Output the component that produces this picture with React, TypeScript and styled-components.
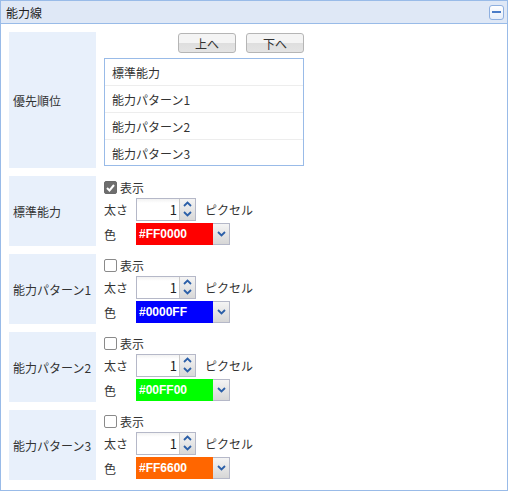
import React from 'react'
import styled, { createGlobalStyle } from 'styled-components'

const GlobalStyle = createGlobalStyle`
  html, body { margin: 0; padding: 0; background: #fff; }
  body { font-family: "Noto Sans CJK JP", "Noto Sans", sans-serif; font-size: 12px; color: #222; }
`

const Panel = styled.div`
  width: 508px;
  height: 491px;
  box-sizing: border-box;
  border: 1px solid #99bbe8;
  background: #fff;
`

const Header = styled.div`
  height: 22px;
  border-bottom: 1px solid #99bbe8;
  background: #dfe8f6;
  display: flex;
  align-items: center;
  justify-content: space-between;
  padding: 0 3px 0 5px;
  font-size: 12px;
  color: #222;
`

const CollapseBtn = styled.div`
  width: 13px;
  height: 13px;
  border: 1px solid #8fb0e0;
  border-radius: 3px;
  background: linear-gradient(#ffffff, #e6eefa);
  display: flex;
  align-items: center;
  justify-content: center;
  &::after {
    content: '';
    width: 9px;
    height: 2px;
    background: #4a7cc8;
  }
`

const Body = styled.div`
  display: grid;
  grid-template-columns: 87px 1fr;
  column-gap: 8px;
  row-gap: 8px;
  padding: 8px 0 0 8px;
`

const LabelCell = styled.div<{ $h: number }>`
  height: ${p => p.$h}px;
  background: #e8f0fb;
  display: flex;
  align-items: center;
  padding-left: 4px;
  font-size: 12px;
  white-space: nowrap;
  color: #333;
`

const OrderCell = styled.div`
  width: 200px;
  display: flex;
  flex-direction: column;
`

const BtnRow = styled.div`
  display: flex;
  justify-content: flex-end;
  gap: 10px;
  padding-top: 1px;
  margin-bottom: 5px;
`

const Btn = styled.div`
  width: 56px;
  height: 18px;
  border: 1px solid #b5b5b5;
  border-radius: 3px;
  background: linear-gradient(#f4f4f4 0%, #f4f4f4 50%, #dedede 50%, #e4e4e4 100%);
  display: flex;
  align-items: center;
  justify-content: center;
  font-size: 12px;
  color: #333;
`

const ListBox = styled.div`
  border: 1px solid #99bbe8;
  height: 108px;
  box-sizing: border-box;
`

const ListItem = styled.div`
  height: 26px;
  border-bottom: 1px solid #ededed;
  display: flex;
  align-items: center;
  padding-left: 7px;
  font-size: 12px;
  color: #333;
  &:last-child { border-bottom: none; }
`

const SettingCell = styled.div`
  display: flex;
  flex-direction: column;
  padding-top: 4px;
`

const CheckLine = styled.label`
  display: flex;
  align-items: center;
  height: 15px;
  gap: 3px;
  font-size: 12px;
  color: #333;
`

const Box = styled.span<{ $on: boolean }>`
  width: 11px;
  height: 11px;
  border: 1px solid ${p => (p.$on ? '#6b6b6b' : '#8a8a8a')};
  border-radius: 2px;
  background: ${p => (p.$on ? '#6e6e6e' : '#fff')};
  display: flex;
  align-items: center;
  justify-content: center;
`

const FieldLine = styled.div`
  display: flex;
  align-items: center;
  height: 22px;
  margin-top: 3px;
  font-size: 12px;
  color: #333;
`

const FieldLabel = styled.span`
  width: 32px;
`

const Spinner = styled.div`
  width: 58px;
  height: 21px;
  border: 1px solid #b5b8c8;
  display: flex;
  background: linear-gradient(#f2f2f2, #fff 4px);
`

const SpinValue = styled.div`
  flex: 1;
  text-align: right;
  padding-right: 2px;
  font-size: 13px;
  line-height: 21px;
  color: #222;
`

const SpinArrows = styled.div`
  width: 15px;
  display: flex;
  flex-direction: column;
  border-left: 1px solid #c8c8c8;
  background: linear-gradient(#f4f4f4, #d8d8d8);
`

const SpinHalf = styled.div`
  flex: 1;
  display: flex;
  align-items: center;
  justify-content: center;
`

const Unit = styled.span`
  margin-left: 9px;
`

const ColorSelect = styled.div`
  width: 94px;
  height: 22px;
  display: flex;
  box-sizing: border-box;
`

const ColorValue = styled.div<{ $bg: string }>`
  flex: 1;
  background: ${p => p.$bg};
  color: #fff;
  font-family: "Liberation Sans", Arial, sans-serif;
  font-weight: bold;
  font-size: 12px;
  line-height: 22px;
  padding-left: 3px;
`

const DropBtn = styled.div`
  width: 16px;
  border: 1px solid #b5b8c8;
  border-left: none;
  background: linear-gradient(#f4f4f4, #d6d6d6);
  display: flex;
  align-items: center;
  justify-content: center;
`

const Chevron: React.FC<{ dir: 'up' | 'down' }> = ({ dir }) => (
  <svg width="9" height="6" viewBox="0 0 9 6">
    <path
      d={dir === 'up' ? 'M1 5 L4.5 1.5 L8 5' : 'M1 1 L4.5 4.5 L8 1'}
      fill="none"
      stroke="#2b5fa8"
      strokeWidth="1.8"
    />
  </svg>
)

const lines = [
  { name: '標準能力', on: true, color: '#FF0000', bg: '#ff0000' },
  { name: '能力パターン1', on: false, color: '#0000FF', bg: '#0000ff' },
  { name: '能力パターン2', on: false, color: '#00FF00', bg: '#00ff00' },
  { name: '能力パターン3', on: false, color: '#FF6600', bg: '#ff6600' },
]

const App: React.FC = () => (
  <>
    <GlobalStyle />
    <Panel>
      <Header>
        <span>能力線</span>
        <CollapseBtn />
      </Header>
      <Body>
        <LabelCell $h={136}>優先順位</LabelCell>
        <OrderCell>
          <BtnRow>
            <Btn>上へ</Btn>
            <Btn>下へ</Btn>
          </BtnRow>
          <ListBox>
            {lines.map(l => (
              <ListItem key={l.name}>{l.name}</ListItem>
            ))}
          </ListBox>
        </OrderCell>
        {lines.map(l => (
          <React.Fragment key={l.name}>
            <LabelCell $h={70}>{l.name}</LabelCell>
            <SettingCell>
              <CheckLine>
                <Box $on={l.on}>
                  {l.on && (
                    <svg width="9" height="8" viewBox="0 0 9 8">
                      <path d="M1 4 L3.5 6.5 L8 1" fill="none" stroke="#fff" strokeWidth="2" />
                    </svg>
                  )}
                </Box>
                表示
              </CheckLine>
              <FieldLine>
                <FieldLabel>太さ</FieldLabel>
                <Spinner>
                  <SpinValue>1</SpinValue>
                  <SpinArrows>
                    <SpinHalf><Chevron dir="up" /></SpinHalf>
                    <SpinHalf><Chevron dir="down" /></SpinHalf>
                  </SpinArrows>
                </Spinner>
                <Unit>ピクセル</Unit>
              </FieldLine>
              <FieldLine>
                <FieldLabel>色</FieldLabel>
                <ColorSelect>
                  <ColorValue $bg={l.bg}>{l.color}</ColorValue>
                  <DropBtn><Chevron dir="down" /></DropBtn>
                </ColorSelect>
              </FieldLine>
            </SettingCell>
          </React.Fragment>
        ))}
      </Body>
    </Panel>
  </>
)

export default App
